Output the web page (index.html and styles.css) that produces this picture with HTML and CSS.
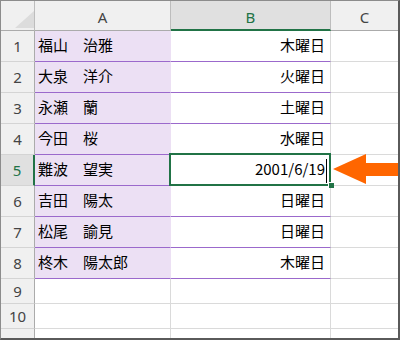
FILE: index.html
```html
<!DOCTYPE html>
<html lang="ja">
<head>
<meta charset="utf-8">
<link rel="stylesheet" href="styles.css">
</head>
<body>
<div class="frame">
  <div class="sheet">
    <div class="ch corner"><svg class="tri" width="20" height="18" viewBox="0 0 20 18"><polygon points="19,0 19,17 0,17" fill="#dcdcdc"/></svg></div>
    <div class="ch">A</div>
    <div class="ch ch-sel">B</div>
    <div class="ch ch-last">C</div>

    <div class="rh">1</div><div class="c a">福山　治雅</div><div class="c b">木曜日</div><div class="c cc pl"></div>
    <div class="rh">2</div><div class="c a">大泉　洋介</div><div class="c b">火曜日</div><div class="c cc pl"></div>
    <div class="rh">3</div><div class="c a">永瀬　蘭</div><div class="c b">土曜日</div><div class="c cc pl"></div>
    <div class="rh">4</div><div class="c a">今田　桜</div><div class="c b">水曜日</div><div class="c cc pl"></div>
    <div class="rh rh-sel">5</div><div class="c a">難波　望実</div><div class="c b">2001/6/19</div><div class="c cc pl"></div>
    <div class="rh">6</div><div class="c a">吉田　陽太</div><div class="c b">日曜日</div><div class="c cc pl"></div>
    <div class="rh">7</div><div class="c a">松尾　諭見</div><div class="c b">日曜日</div><div class="c cc pl"></div>
    <div class="rh">8</div><div class="c a">柊木　陽太郎</div><div class="c b">木曜日</div><div class="c cc pl"></div>

    <div class="rh">9</div><div class="c e"></div><div class="c e"></div><div class="c cc"></div>
    <div class="rh">10</div><div class="c e"></div><div class="c e"></div><div class="c cc"></div>
    <div class="rh rh-cut">11</div><div class="c e"></div><div class="c e"></div><div class="c cc"></div>
  </div>

  <div class="selection"></div>
  <div class="handle"></div>
  <div class="caret"></div>
  <svg class="arrow" width="66" height="32" viewBox="0 0 66 32">
    <polygon points="0,16 33,1 33,10 65,10 65,23 33,23 33,31" fill="#ff6600"/>
  </svg>
</div>
</body>
</html>
```

FILE: styles.css
```css
html, body {
  margin: 0;
  padding: 0;
  background: #ffffff;
}

.frame {
  position: relative;
  width: 400px;
  height: 340px;
  box-sizing: border-box;
  border-top: 1px solid #8c8c8c;
  border-left: 1px solid #8c8c8c;
  border-right: 2px solid #5a5a5a;
  border-bottom: 2px solid #5a5a5a;
  overflow: hidden;
  background: #ffffff;
}

.sheet {
  display: grid;
  grid-template-columns: 34px 136px 160px 1fr;
  grid-template-rows: 30px repeat(8, 31px) 25px 25px 25px;
}

.ch {
  box-sizing: border-box;
  background: #f0f0f0;
  border-right: 1px solid #bdbdbd;
  border-bottom: 1px solid #ababab;
  display: flex;
  align-items: center;
  justify-content: center;
  padding-top: 3px;
  font-family: "Noto Sans", "Liberation Sans", sans-serif;
  font-size: 15px;
  color: #444444;
}

.corner {
  position: relative;
  padding: 0;
}

.tri {
  position: absolute;
  left: 14px;
  top: 10px;
}

.ch-sel {
  background: #e0e0e0;
  border-bottom: 2px solid #217346;
  color: #217346;
}

.ch-last {
  border-right: none;
}

.rh {
  box-sizing: border-box;
  background: #f0f0f0;
  border-right: 1px solid #ababab;
  border-bottom: 1px solid #d4d4d4;
  display: flex;
  align-items: center;
  justify-content: center;
  font-family: "Noto Sans", "Liberation Sans", sans-serif;
  font-size: 15px;
  color: #444444;
}

.rh-sel {
  background: #e0e0e0;
  border-right: 2px solid #217346;
  color: #217346;
}

.rh-cut {
  align-items: flex-start;
  padding-top: 3px;
}

.c {
  box-sizing: border-box;
  border-right: 1px solid #dadada;
  border-bottom: 1px solid #dadada;
  display: flex;
  align-items: center;
  font-family: "Noto Sans CJK JP", "Noto Sans", sans-serif;
  font-size: 15px;
  color: #000000;
  white-space: nowrap;
  padding-bottom: 3px;
}

.a {
  background: #ece0f4;
  border-right-color: #ece0f4;
  border-bottom-color: #9b69cc;
  padding-left: 3px;
}

.b {
  border-bottom-color: #9b69cc;
  justify-content: flex-end;
  padding-right: 5px;
}

.cc {
  border-right: none;
}

.selection {
  position: absolute;
  left: 168px;
  top: 152px;
  width: 162px;
  height: 33px;
  box-sizing: border-box;
  border: 2px solid #217346;
}

.handle {
  position: absolute;
  left: 327px;
  top: 181px;
  width: 5px;
  height: 5px;
  background: #217346;
  border-left: 1px solid #ffffff;
  border-top: 1px solid #ffffff;
}

.caret {
  position: absolute;
  left: 325px;
  top: 158px;
  width: 1px;
  height: 24px;
  background: #000000;
}

.arrow {
  position: absolute;
  left: 332px;
  top: 152px;
}
```
